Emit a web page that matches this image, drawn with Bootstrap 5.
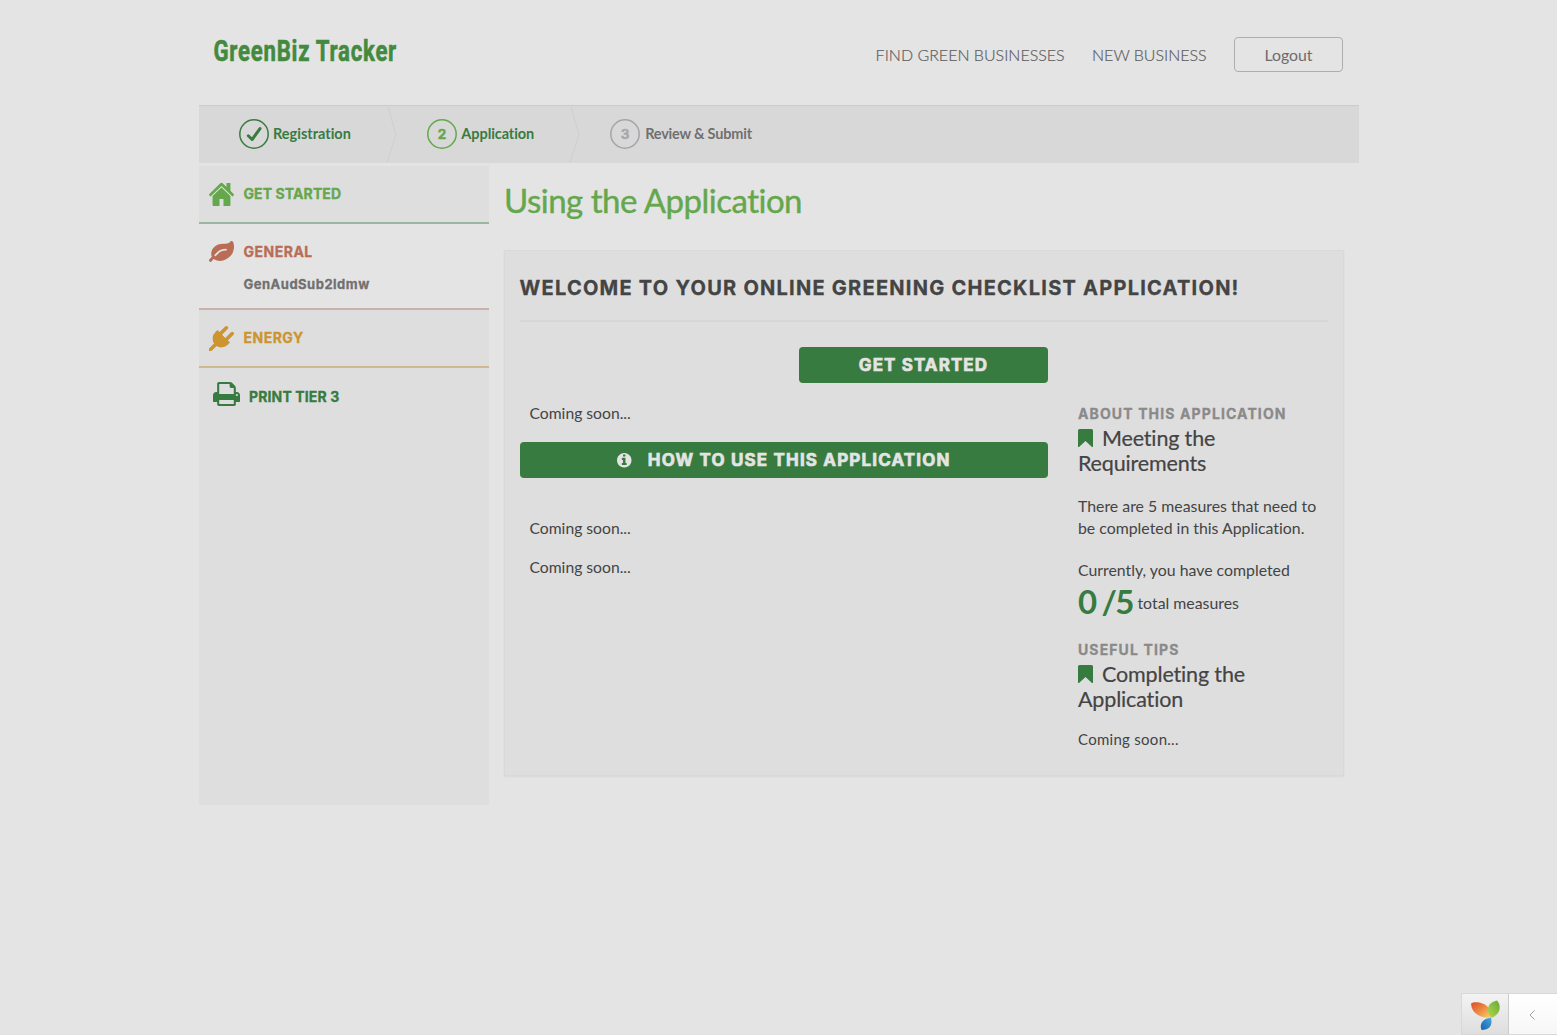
<!DOCTYPE html>
<html lang="en">
<head>
<meta charset="utf-8">
<meta name="viewport" content="width=device-width, initial-scale=1">
<title>GreenBiz Tracker</title>
<link href="https://cdn.jsdelivr.net/npm/bootstrap@5.3.0/dist/css/bootstrap.min.css" rel="stylesheet">
<style>
  :root { --forest: #387b40; --leafy: #64a74c; --ink: #444; }
  body { background: #e4e4e4; color: var(--ink); font-family: Lato, sans-serif; font-size: 15.85px; line-height: 22px; min-height: 1035px; overflow: hidden; font-variant-ligatures: none; }
  svg { display: block; flex: none; overflow: visible; }
  .page-wrap { width: 1160px; margin-left: 199px; }
  .display-face { font-family: Inter, sans-serif; font-weight: 700; -webkit-text-stroke: .3px currentColor; }
  .site-header { height: 105px; padding: 37px 16px 0 15px; }
  .top-link { font-size: 16px; font-weight: 300; color: #606060; -webkit-text-stroke: .2px currentColor; text-decoration: none; line-height: 35px; white-space: nowrap; margin-right: 27.4px; }
  .btn-logout { width: 109px; height: 35px; border: 1px solid #aeaeae; border-radius: 4px; color: #6c6c6c; font-size: 15.8px; font-weight: 400; padding: 0; line-height: 33px; }
  .steps { height: 58px; background: #d8d8d8; border-top: 1px solid #cbcbcb; }
  .step-item { color: var(--forest); font-size: 14.5px; font-weight: 700; gap: 4px; padding: 0 36px 2px 30px; white-space: nowrap; }
  .step-one { padding-left: 40px; }
  .step-two { letter-spacing: -.08px; gap: 4.500px; }
  .step-three { color: #707070; letter-spacing: -.2px; gap: 5.500px; padding-left: 29.500px; }
  .step-item svg text { font: 700 13.5px Inter, sans-serif; }
  .side { width: 290px; height: 639px; background: #dedede; margin-top: 3px; }
  .side-item { border-bottom: 2px solid; padding: 0 10px; font-size: 14px; letter-spacing: .5px; }
  .side-row { height: 56px; gap: 9.500px; }
  .side-home { color: var(--leafy); border-color: #9bb49f; letter-spacing: .1px; }
  .side-general { color: #b96c56; border-color: #cbb1ab; background: #e4e4e4; }
  .side-energy { color: #cd942f; border-color: #cfb88f; }
  .side-print { color: var(--forest); font-size: 14px; padding-left: 14px; letter-spacing: .13px; height: 52px; gap: 9px; }
  .side-print span { padding-top: 6px; }
  .sub-item { color: #707070; font-size: 13px; line-height: 18px; padding: 0 0 15px 34.5px; margin-top: -5px; }
  .main-col { width: 840px; margin-left: 15px; }
  .page-title { color: var(--leafy); font-size: 33px; line-height: 40px; font-weight: 400; margin: 17px 0 30px; letter-spacing: -.5px; -webkit-text-stroke: .4px currentColor; }
  .panel { height: 526px; background: #dedede; border: 1px solid #d9d9d9; box-shadow: 0 1px 2px rgba(0,0,0,.05); padding: 0 15px; }
  .panel-title { font-size: 20px; line-height: 26px; margin: 24px 0 0; padding-bottom: 19px; border-bottom: 2px solid #d7d7d7; white-space: nowrap; letter-spacing: 1.25px; text-indent: -.5px; }
  .panel-cols { gap: 30px; }
  .left-col { width: 528px; padding-top: 25px; }
  .right-col { width: 250px; padding-top: 82px; }
  .btn-forest { background: var(--forest); color: #e4e4e4; height: 36px; border: 0; border-radius: 4px; font-size: 17px; padding: 1px 0 0; letter-spacing: 1.1px; -webkit-text-stroke: .7px currentColor; }
  .btn-forest:hover { background: #2f6936; color: #fff; }
  .btn-start { width: 249px; }
  .btn-how { margin-top: 18px; letter-spacing: 1.16px; }
  .soon { padding-left: 9.500px; margin: 0; font-size: 15.7px; }
  .soon-a { margin-top: 19px; }
  .soon-b { margin-top: 39px; }
  .soon-c { margin-top: 17px; }
  .eyebrow { color: #8a8a8a; font-size: 14px; line-height: 20px; margin: 0; white-space: nowrap; letter-spacing: 1.12px; }
  .lbl-tips { margin-top: 17px; }
  .tip-title { font-size: 21.5px; line-height: 25px; font-weight: 400; margin: 2px 0 0; letter-spacing: -.15px; -webkit-text-stroke: .2px currentColor; }
  .tip-title svg { display: inline-block; vertical-align: -1px; margin-right: 9px; }
  .para-a { margin-top: 19px; white-space: nowrap; }
  .para-b { margin-top: 20px; }
  .para-c { margin-top: 16px; font-size: 15px; letter-spacing: .28px; }
  .tally { color: var(--forest); font-size: 33px; font-weight: 700; line-height: 42px; letter-spacing: -1.8px; margin-top: -1px; margin-bottom: 1px; }
  .tally-note { margin-left: 5px; padding-top: 1px; }
  .dev-toolbar { right: 0; bottom: 0; height: 42px; width: 96px; border: 1px solid #d8d8d8; border-right: 0; }
  .dev-logo { width: 47px; background: linear-gradient(#f3f3f3, #dedede); border-right: 1px solid #ccc; padding-top: 2px; }
  .dev-toggle { background: linear-gradient(#fff, #f7f7f7); padding: 2px 2px 0 0; }
</style>
</head>
<body>
<div class="page-wrap">
  <header class="site-header d-flex justify-content-between align-items-start">
    <a href="#" aria-label="GreenBiz Tracker">
      <svg width="190" height="34" viewBox="0 0 190 34"><text x="-.500" y="24.300" textLength="183.500" lengthAdjust="spacingAndGlyphs" font-family="Roboto, sans-serif" font-weight="700" font-size="29.500" letter-spacing="1" fill="#438a3f" stroke="#438a3f" stroke-width=".6">GreenBiz Tracker</text></svg>
    </a>
    <nav class="d-flex">
      <a class="top-link nav-find" href="#">FIND GREEN BUSINESSES</a>
      <a class="top-link nav-new" href="#">NEW BUSINESS</a>
      <button class="btn btn-logout" type="button">Logout</button>
    </nav>
  </header>

  <div class="steps d-flex align-items-stretch">
    <div class="step-item d-flex align-items-center step-one">
      <svg width="30" height="30" viewBox="0 0 30 30" fill="none" stroke="#387b40"><circle cx="15" cy="15" r="14.200" stroke-width="1.500"/><path d="M9.300 16.800l3.800 3.700L21 9.500" stroke-width="3" stroke-linecap="round" stroke-linejoin="round"/></svg>
      <span>Registration</span>
    </div>
    <svg width="10" height="57" viewBox="0 0 10 57" fill="none" stroke="#cfcfcf"><path d="M1 1l8 27.500-9 28"/></svg>
    <div class="step-item d-flex align-items-center step-two">
      <svg width="30" height="30" viewBox="0 0 30 30"><circle cx="15" cy="15" r="14.200" fill="none" stroke="#64a74c" stroke-width="1.500"/><text x="15" y="20" text-anchor="middle" fill="#64a74c" stroke="#64a74c" stroke-width=".4">2</text></svg>
      <span>Application</span>
    </div>
    <svg width="10" height="57" viewBox="0 0 10 57" fill="none" stroke="#cfcfcf"><path d="M1 1l8 27.500-9 28"/></svg>
    <div class="step-item d-flex align-items-center step-three">
      <svg width="30" height="30" viewBox="0 0 30 30"><circle cx="15" cy="15" r="14.200" fill="none" stroke="#a5a5a5" stroke-width="1.500"/><text x="15" y="20" text-anchor="middle" fill="#a8a8a8" stroke="#a8a8a8" stroke-width=".4">3</text></svg>
      <span>Review &amp; Submit</span>
    </div>
  </div>

  <div class="d-flex align-items-start">
    <aside class="side display-face">
      <div class="side-item side-home">
        <div class="side-row d-flex align-items-center">
          <svg width="25" height="24" viewBox="90 205 1612 1331" preserveAspectRatio="none" fill="currentColor"><path d="M1472 992v480q0 26-19 45t-45 19h-384v-384h-256v384h-384q-26 0-45-19t-19-45v-480q0-1 .5-3t.5-3l575-474 575 474q1 2 1 6zm223-69l-62 74q-8 9-21 11h-3q-13 0-21-7l-692-577-692 577q-12 8-24 7-13-2-21-11l-62-74q-8-10-7-23.500t11-21.500l719-599q32-26 76-26t76 26l244 204v-195q0-14 9-23t23-9h192q14 0 23 9t9 23v408l219 182q10 8 11 21.500t-7 23.500z"/></svg>
          <span class="lbl-start">GET STARTED</span>
        </div>
      </div>
      <div class="side-item side-general">
        <div class="side-row d-flex align-items-center">
          <svg width="25" height="23" viewBox="0 128 1792 1536" preserveAspectRatio="none" fill="currentColor"><path d="M1280 704q0-26-19-45t-45-19q-172 0-318 49.500t-259.500 134-235.500 219.500q-19 21-19 45 0 26 19 45t45 19q24 0 45-19 27-24 74-71t67-66q137-124 268.500-176t313.500-52q26 0 45-19t19-45zm512-198q0 95-20 193-46 224-184.500 383t-357.500 268q-214 108-438 108-148 0-286-47-15-5-88-42t-96-37q-16 0-39.500 32t-45 70-52.500 70-60 32q-43 0-63.500-17.500t-45.500-59.500q-2-4-6-11t-5.500-10-3-9.500-1.500-13.500q0-35 31-73.500t68-65.500 68-56 31-48q0-4-14-38t-16-44q-9-51-9-104 0-115 43.500-220t119-184.500 170.500-139 204-95.500q55-18 145-25.500t179.500-9 178.500-6 163.500-24 113.500-56.500l29.500-29.500 29.500-28 27-20 36.500-16 43.500-4.500q39 0 70.500 46t47.500 112 24 124 8 96z"/></svg>
          <span class="lbl-general">GENERAL</span>
        </div>
        <div class="sub-item"><span class="lbl-sub">GenAudSub2ldmw</span></div>
      </div>
      <div class="side-item side-energy">
        <div class="side-row d-flex align-items-center">
          <svg width="25" height="25" viewBox="0 0 1792 1792" preserveAspectRatio="none" fill="currentColor"><path d="M1755 453q37 38 37 90.500t-37 90.500l-401 400 150 150-160 160q-163 163-389.500 186.500t-411.500-100.500l-362 362h-181v-181l362-362q-124-185-100.500-411.500t186.500-389.500l160-160 150 150 400-401q38-37 91-37t90 37 37 90.500-37 90.500l-400 401 234 234 401-400q38-37 91-37t90 37z"/></svg>
          <span class="lbl-energy">ENERGY</span>
        </div>
      </div>
      <div class="side-print side-row d-flex align-items-center">
        <svg width="27" height="24" viewBox="64 128 1664 1536" preserveAspectRatio="none" fill="currentColor"><path d="M448 1536h896v-256h-896v256zm0-640h896v-384h-160q-40 0-68-28t-28-68v-160h-640v640zm1152 64q0-26-19-45t-45-19-45 19-19 45 19 45 45 19 45-19 19-45zm128 0v416q0 13-9.500 22.500t-22.500 9.500h-224v160q0 40-28 68t-68 28h-960q-40 0-68-28t-28-68v-160h-224q-13 0-22.500-9.500t-9.500-22.500v-416q0-79 56.500-135.500t135.500-56.500h64v-544q0-40 28-68t68-28h672q40 0 88 20t76 48l152 152q28 28 48 76t20 88v256h64q79 0 135.500 56.500t56.500 135.500z"/></svg>
        <span class="lbl-print">PRINT TIER 3</span>
      </div>
    </aside>

    <main class="main-col">
      <h1 class="page-title">Using the Application</h1>
      <section class="panel">
        <h2 class="panel-title display-face">WELCOME TO YOUR ONLINE GREENING CHECKLIST APPLICATION!</h2>
        <div class="panel-cols d-flex">
          <div class="left-col d-flex flex-column">
            <button class="btn btn-forest btn-start align-self-end display-face" type="button"><span class="lbl-cta">GET STARTED</span></button>
            <p class="soon soon-a">Coming soon...</p>
            <button class="btn btn-forest btn-how display-face d-flex align-items-center justify-content-center" type="button">
              <svg width="14.500" height="14.500" viewBox="128 128 1536 1536" fill="currentColor"><path d="M1152 1376v-160q0-14-9-23t-23-9h-96v-512q0-14-9-23t-23-9h-320q-14 0-23 9t-9 23v160q0 14 9 23t23 9h96v320h-96q-14 0-23 9t-9 23v160q0 14 9 23t23 9h448q14 0 23-9t9-23zm-128-896v-160q0-14-9-23t-23-9h-192q-14 0-23 9t-9 23v160q0 14 9 23t23 9h192q14 0 23-9t9-23zm640 416q0 209-103 385.500t-279.500 279.500-385.500 103-385.500-103-279.500-279.500-103-385.500 103-385.500 279.500-279.500 385.500-103 385.500 103 279.500 279.500 103 385.500z"/></svg>
              <span class="lbl-how ms-3">HOW TO USE THIS APPLICATION</span>
            </button>
            <p class="soon soon-b">Coming soon...</p>
            <p class="soon soon-c">Coming soon...</p>
          </div>
          <div class="right-col">
            <h3 class="eyebrow display-face lbl-about">ABOUT THIS APPLICATION</h3>
            <h4 class="tip-title"><svg width="15" height="18" viewBox="0 0 15 18" fill="#387b40"><path d="M1.500 0h12q1.500 0 1.500 1.500V18h-1L7.500 12 1 18H0V1.500Q0 0 1.500 0z"/></svg>Meeting the<br>Requirements</h4>
            <p class="para-a mb-0">There are 5 measures that need to<br>be completed in this Application.</p>
            <p class="para-b mb-0">Currently, you have completed</p>
            <div class="d-flex align-items-center"><span class="tally">0 /5</span><span class="tally-note">total measures</span></div>
            <h3 class="eyebrow display-face lbl-tips">USEFUL TIPS</h3>
            <h4 class="tip-title"><svg width="15" height="18" viewBox="0 0 15 18" fill="#387b40"><path d="M1.500 0h12q1.500 0 1.500 1.500V18h-1L7.500 12 1 18H0V1.500Q0 0 1.500 0z"/></svg>Completing the<br>Application</h4>
            <p class="para-c mb-0">Coming soon...</p>
          </div>
        </div>
      </section>
    </main>
  </div>
</div>

<div class="dev-toolbar position-fixed d-flex">
  <div class="dev-logo d-flex align-items-center justify-content-center">
    <svg width="30" height="30" viewBox="0 0 30 30">
      <defs>
        <linearGradient id="petalRed" x1="0" y1="0" x2="1" y2="1"><stop offset="0" stop-color="#dc4a28"/><stop offset=".55" stop-color="#ee9147"/><stop offset="1" stop-color="#f8d66b"/></linearGradient>
        <linearGradient id="petalGreen" x1="1" y1="0" x2="0" y2="1"><stop offset="0" stop-color="#66a936"/><stop offset="1" stop-color="#b5d84f"/></linearGradient>
        <linearGradient id="petalBlue" x1="0" y1="1" x2="1" y2="0"><stop offset="0" stop-color="#1763b0"/><stop offset="1" stop-color="#47a5d8"/></linearGradient>
      </defs>
      <path d="M1 3.500C6 0 23 3 21 18C11 18 1.500 14 1 3.500z" fill="url(#petalRed)"/>
      <path d="M27 .500C17 2 15.500 11 21.500 18C31 14 31.500 5 27 .500z" fill="url(#petalGreen)"/>
      <path d="M21 18C13 18 9 24 11.500 30C19 30 23 26 21 18z" fill="url(#petalBlue)"/>
    </svg>
  </div>
  <div class="dev-toggle flex-fill d-flex align-items-center justify-content-center">
    <svg width="6" height="10" viewBox="0 0 6 10" fill="none" stroke="#a0a0a0"><path d="M5.500 .500L1 5l4.500 4.500"/></svg>
  </div>
</div>
<script src="https://cdn.jsdelivr.net/npm/bootstrap@5.3.0/dist/js/bootstrap.bundle.min.js"></script>
</body>
</html>
